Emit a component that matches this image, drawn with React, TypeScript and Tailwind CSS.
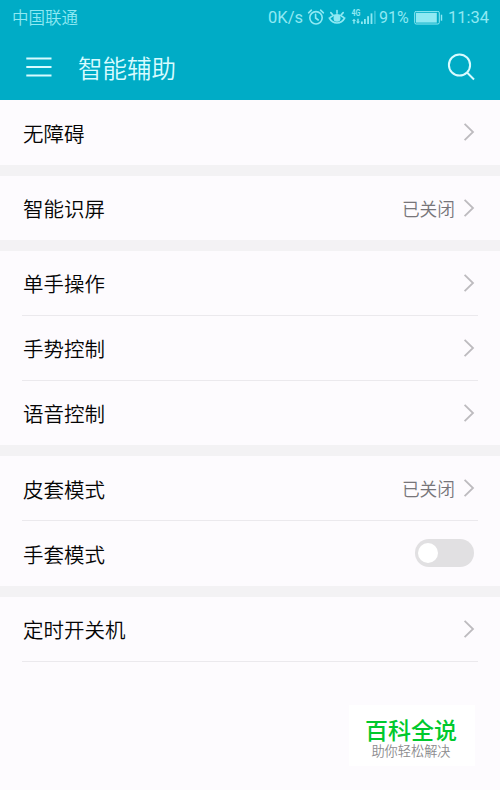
import React from 'react';

type Row = {
  label: string;
  value?: string;
  toggle?: boolean;
};

const groups: Row[][] = [
  [{ label: '无障碍' }],
  [{ label: '智能识屏', value: '已关闭' }],
  [{ label: '单手操作' }, { label: '手势控制' }, { label: '语音控制' }],
  [{ label: '皮套模式', value: '已关闭' }, { label: '手套模式', toggle: true }],
];

const StatusBar = () => (
  <div className="flex h-9 items-center justify-between pl-3 pr-[11px] text-[#8fe9f3]">
    <span className="-mt-px text-[16.5px] leading-none font-[350]">中国联通</span>
    <div className="flex items-center font-['Roboto',sans-serif] text-[16.5px] leading-none">
      <span className="w-[35px] whitespace-nowrap -ml-[2px] mr-[2px]">0K/s</span>
      {/* alarm clock */}
      <svg className="ml-[2px] h-[18px] w-[18px]" viewBox="0 0 18 18" fill="none" stroke="currentColor" strokeWidth="1.6" strokeLinecap="round">
        <circle cx="9" cy="8.8" r="6.2" />
        <path d="M1.6 3.8 4.4 1.2M16.4 3.8 13.6 1.2M8.6 5.4v3.6l2.6 2" />
      </svg>
      {/* eye comfort */}
      <svg className="ml-[3px] h-[18px] w-[18px]" viewBox="0 0 18 18" fill="none" stroke="currentColor" strokeWidth="1.6" strokeLinecap="round">
        <path d="M1.3 9C5 15.6 13 15.6 16.7 9" />
        <path d="M2.4 8.4C6 5 12 5 15.6 8.4" />
        <circle cx="9" cy="9.2" r="2.7" fill="currentColor" />
        <path d="M9 1.6v2.6M2.8 3.6 4.6 5.6M15.2 3.6 13.4 5.6" />
      </svg>
      {/* 4G signal */}
      <svg className="ml-[5px] mr-[2px] h-[18px] w-[26px] overflow-visible" viewBox="0 0 26 18" fill="currentColor">
        <text x=".5" y="7.4" fontSize="9.5" fontWeight="700" textLength="9" lengthAdjust="spacingAndGlyphs">4G</text>
        <path d="M3 9.8 5 12H3.7V14.8H2.3V12H1ZM7 14.8 5 12.6H6.3V9.8H7.7V12.6H9Z" />
        <rect x="10" y="12.5" width="1.8" height="2.5" />
        <rect x="13" y="10" width="1.8" height="5" />
        <rect x="16.2" y="7.2" width="1.8" height="7.8" />
        <rect x="19.6" y="4.4" width="1.8" height="10.6" />
        <rect x="23" y="1.8" width="1.8" height="13.2" opacity=".4" />
      </svg>
      <span className="w-[31px] whitespace-nowrap text-[16px]">91%</span>
      <svg className="ml-1 h-[14px] w-[29px]" viewBox="0 0 29 14">
        <rect x=".7" y=".4" width="24.6" height="12.6" rx="1.5" fill="none" stroke="currentColor" strokeWidth="1" />
        <rect x="2" y="1.8" width="20.8" height="9.8" fill="currentColor" />
        <rect x="26.8" y="3.7" width="1.4" height="6" fill="currentColor" />
      </svg>
      <span className="ml-[5px] w-[41px] whitespace-nowrap text-[16.5px]">11:34</span>
    </div>
  </div>
);

const Chevron = () => (
  <svg className="ml-2 h-5 w-3" viewBox="0 0 12 20" fill="none" stroke="#bdbbbf" strokeWidth="1.8">
    <path d="M1.6 1.8 10 10 1.6 18.2" />
  </svg>
);

const Toggle = () => (
  <div className="mr-[4px] flex h-7 w-[59px] items-center rounded-full bg-[#e1e0e2] pl-[3px]">
    <div className="h-5 w-5 rounded-full bg-white" />
  </div>
);

const SettingRow = ({ row, divider }: { row: Row; divider: boolean }) => (
  <div className={`mx-[22px] flex h-full items-center justify-between ${divider ? 'border-b border-[#ebe9ed]' : ''}`}>
    <span className="pt-px pl-px text-[20.5px] leading-none font-[350] text-[#050505]">{row.label}</span>
    {row.toggle ? (
      <Toggle />
    ) : (
      <div className="flex items-center pr-[3px]">
        {row.value && <span className="pt-px text-[17.7px] leading-none font-[350] text-[#77757a]">{row.value}</span>}
        <Chevron />
      </div>
    )}
  </div>
);

const App = () => {
  return (
    <div className="flex h-[790px] w-[500px] flex-col overflow-hidden bg-[#fdfbfe] font-['Noto_Sans_CJK_SC',sans-serif]">
      <header className="h-[100px] shrink-0 bg-[#00acc6]">
        <StatusBar />
        <div className="flex h-16 items-center pl-[26px] pr-[25px] text-[#d8fbff]">
          <svg className="-mt-[2px] h-5 w-[26px]" viewBox="0 0 26 20" stroke="currentColor" strokeWidth="2">
            <path d="M.3 1.5H25.5M.3 10H25.5M.3 18.5H25.5" />
          </svg>
          <h1 className="ml-[26px] flex-1 text-[24.5px] leading-none font-[350]">智能辅助</h1>
          <svg className="-mt-[2px] h-7 w-7" viewBox="0 0 28 28" fill="none" stroke="currentColor" strokeWidth="2">
            <circle cx="12.5" cy="12" r="10.6" />
            <path d="M20 19.5 27 26.5" />
          </svg>
        </div>
      </header>

      <main>
        {groups.map((rows) => (
          <React.Fragment key={rows[0].label}>
            <section>
              {rows.map((row, i) => (
                <div key={row.label} className="h-[64.7px]">
                  <SettingRow row={row} divider={i < rows.length - 1} />
                </div>
              ))}
            </section>
            <div className="h-[11px] bg-[#f3f2f4]" />
          </React.Fragment>
        ))}
        <section className="h-[64.7px]">
          <SettingRow row={{ label: '定时开关机' }} divider />
        </section>
      </main>

      <footer className="mt-auto mr-[25px] mb-6 flex h-[61px] w-[126px] flex-col items-center self-end bg-white pr-[2px] pt-[10px]">
        <span className="text-[23px] leading-7 font-medium text-[#00c92d]">百科全说</span>
        <span className="text-[13.2px] leading-4 font-[350] text-[#8c8b8d]">助你轻松解决</span>
      </footer>
    </div>
  );
};

export default App;
